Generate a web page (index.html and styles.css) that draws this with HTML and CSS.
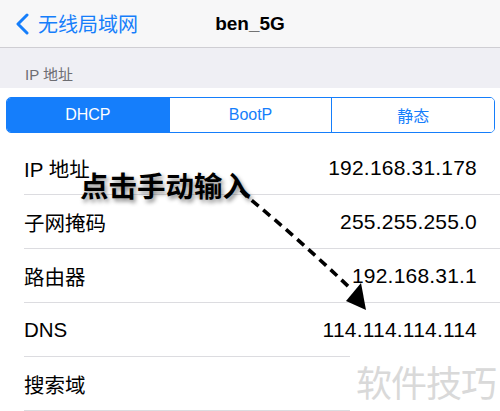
FILE: index.html
```html
<!DOCTYPE html>
<html lang="zh-CN">
<head>
  <meta charset="UTF-8">
  <title>ben_5G</title>
  <link rel="stylesheet" href="styles.css">
</head>
<body>
  <div class="screen">
    <div class="navbar">
      <a class="back">
        <svg class="chevron" width="14" height="22" viewBox="0 0 14 22">
          <path d="M12 2 L3 11 L12 20" fill="none" stroke="#157efb" stroke-width="3" stroke-linecap="round" stroke-linejoin="round"/>
        </svg>
        <span>无线局域网</span>
      </a>
      <div class="title">ben_5G</div>
    </div>

    <div class="section-header">IP 地址</div>

    <div class="content">
      <div class="segmented">
        <div class="seg active">DHCP</div>
        <div class="seg">BootP</div>
        <div class="seg">静态</div>
      </div>

      <ul class="rows">
        <li class="row"><span>IP 地址</span><span class="value">192.168.31.178</span></li>
        <li class="row"><span>子网掩码</span><span class="value">255.255.255.0</span></li>
        <li class="row"><span>路由器</span><span class="value">192.168.31.1</span></li>
        <li class="row"><span>DNS</span><span class="value">114.114.114.114</span></li>
        <li class="row"><span>搜索域</span><span class="value"></span></li>
      </ul>
    </div>

    <!-- annotation over the screenshot -->
    <div class="note">点击手动输入</div>
    <svg class="arrow" width="500" height="411" viewBox="0 0 500 411">
      <path d="M241 190 Q246 196 250 199 Q300 240 352 290" fill="none" stroke="#000" stroke-width="3.6" stroke-dasharray="9 6"/>
      <polygon points="346,301 361,283 366,310" fill="#000"/>
    </svg>

    <div class="watermark">软件技巧</div>
  </div>
</body>
</html>
```

FILE: styles.css
```css
* {
  box-sizing: border-box;
}

html, body {
  margin: 0;
  padding: 0;
  background: #fff;
  font-family: "Liberation Sans", "Noto Sans CJK SC", sans-serif;
}

.screen {
  position: relative;
  width: 500px;
  height: 411px;
  overflow: hidden;
}

.navbar {
  display: flex;
  align-items: center;
  height: 48px;
  background: #f7f7f8;
  border-bottom: 1px solid #cfced3;
  position: relative;
}

.back {
  display: flex;
  align-items: center;
  gap: 9px;
  padding-left: 15px;
  color: #157efb;
  font-size: 20px;
}

.title {
  position: absolute;
  left: 0;
  right: 0;
  text-align: center;
  font-weight: bold;
  font-size: 19px;
  color: #000;
  pointer-events: none;
}

.section-header {
  height: 40px;
  background: #efeff4;
  padding: 15px 0 0 25px;
  font-size: 15px;
  color: #6d6d72;
}

.content {
  padding-top: 9px;
}

.segmented {
  display: flex;
  margin: 0 5px 0 6px;
  height: 36px;
  border: 1px solid #157efb;
  border-radius: 5px;
  overflow: hidden;
}

.seg {
  flex: 1;
  display: flex;
  align-items: center;
  justify-content: center;
  font-size: 16px;
  color: #157efb;
  background: #fff;
}

.seg + .seg {
  border-left: 1px solid #157efb;
}

.seg.active {
  background: #157efb;
  color: #fff;
}

.rows {
  list-style: none;
  margin: 8px 0 0 0;
  padding: 0;
}

.row {
  display: flex;
  justify-content: space-between;
  align-items: center;
  height: 54px;
  margin-left: 24px;
  padding: 1px 23px 0 0;
  border-bottom: 1px solid #dcdce0;
  font-size: 20.5px;
  color: #000;
}

.value {
  font-size: 21px;
  letter-spacing: 0.2px;
}

.note {
  position: absolute;
  left: 80px;
  top: 173px;
  font-size: 28.5px;
  font-weight: bold;
  line-height: 1;
  color: #000;
  text-shadow: 2px 3px 4px rgba(0, 0, 0, 0.45);
}

.arrow {
  position: absolute;
  left: 0;
  top: 0;
}

.watermark {
  position: absolute;
  left: 350px;
  top: 349px;
  width: 150px;
  height: 62px;
  background: #fff;
  padding: 6px 0 0 6px;
  font-size: 36px;
  color: #d9d9d9;
  letter-spacing: -1px;
}
```
